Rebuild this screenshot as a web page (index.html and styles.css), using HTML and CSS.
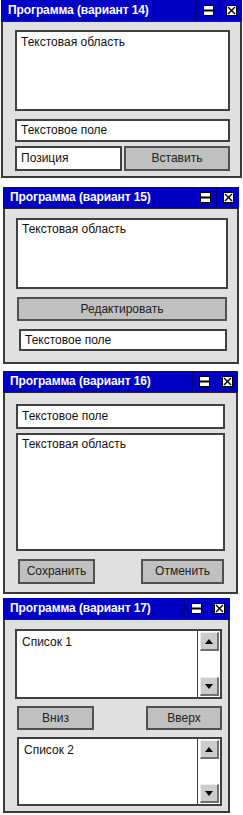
FILE: index.html
```html
<!DOCTYPE html>
<html lang="ru">

<head>
    <meta charset="UTF-8">
    <link rel="stylesheet" href="styles.css">
    <title>Варианты</title>
</head>

<body>
    <div class="win w14">
        <div class="titlebar">
            <span class="title">Программа (вариант 14)</span>
            <span class="ctl">
                <svg width="11" height="11" viewBox="0 0 11 11"><rect x="0.5" y="0.5" width="10" height="10" fill="#fff" stroke="#000"/><line x1="0" y1="5.5" x2="11" y2="5.5" stroke="#000" stroke-width="2"/></svg>
            </span>
            <span class="ctl">
                <svg width="11" height="11" viewBox="0 0 11 11"><rect x="0.5" y="0.5" width="10" height="10" fill="#fff" stroke="#000"/><path d="M2 2L9 9M9 2L2 9" stroke="#000" stroke-width="1.4"/></svg>
            </span>
        </div>
        <div class="body">
            <div class="field area">Текстовая область</div>
            <div class="field line">Текстовое поле</div>
            <div class="row">
                <div class="field pos">Позиция</div>
                <div class="btn ins">Вставить</div>
            </div>
        </div>
    </div>

    <div class="win w15">
        <div class="titlebar">
            <span class="title">Программа (вариант 15)</span>
            <span class="ctl">
                <svg width="11" height="11" viewBox="0 0 11 11"><rect x="0.5" y="0.5" width="10" height="10" fill="#fff" stroke="#000"/><line x1="0" y1="5.5" x2="11" y2="5.5" stroke="#000" stroke-width="2"/></svg>
            </span>
            <span class="ctl">
                <svg width="11" height="11" viewBox="0 0 11 11"><rect x="0.5" y="0.5" width="10" height="10" fill="#fff" stroke="#000"/><path d="M2 2L9 9M9 2L2 9" stroke="#000" stroke-width="1.4"/></svg>
            </span>
        </div>
        <div class="body">
            <div class="field area">Текстовая область</div>
            <div class="btn edit">Редактировать</div>
            <div class="field line">Текстовое поле</div>
        </div>
    </div>

    <div class="win w16">
        <div class="titlebar">
            <span class="title">Программа (вариант 16)</span>
            <span class="ctl">
                <svg width="11" height="11" viewBox="0 0 11 11"><rect x="0.5" y="0.5" width="10" height="10" fill="#fff" stroke="#000"/><line x1="0" y1="5.5" x2="11" y2="5.5" stroke="#000" stroke-width="2"/></svg>
            </span>
            <span class="ctl">
                <svg width="11" height="11" viewBox="0 0 11 11"><rect x="0.5" y="0.5" width="10" height="10" fill="#fff" stroke="#000"/><path d="M2 2L9 9M9 2L2 9" stroke="#000" stroke-width="1.4"/></svg>
            </span>
        </div>
        <div class="body">
            <div class="field line">Текстовое поле</div>
            <div class="field area">Текстовая область</div>
            <div class="row">
                <div class="btn save">Сохранить</div>
                <div class="btn cancel">Отменить</div>
            </div>
        </div>
    </div>

    <div class="win w17">
        <div class="titlebar">
            <span class="title">Программа (вариант 17)</span>
            <span class="ctl">
                <svg width="11" height="11" viewBox="0 0 11 11"><rect x="0.5" y="0.5" width="10" height="10" fill="#fff" stroke="#000"/><line x1="0" y1="5.5" x2="11" y2="5.5" stroke="#000" stroke-width="2"/></svg>
            </span>
            <span class="ctl">
                <svg width="11" height="11" viewBox="0 0 11 11"><rect x="0.5" y="0.5" width="10" height="10" fill="#fff" stroke="#000"/><path d="M2 2L9 9M9 2L2 9" stroke="#000" stroke-width="1.4"/></svg>
            </span>
        </div>
        <div class="body">
            <div class="list list1">
                <div class="list-text">Список 1</div>
                <div class="scroll">
                    <div class="arrow">
                        <svg width="8" height="5" viewBox="0 0 8 5"><path d="M0 5L4 0L8 5Z" fill="#000"/></svg>
                    </div>
                    <div class="arrow">
                        <svg width="8" height="5" viewBox="0 0 8 5"><path d="M0 0L4 5L8 0Z" fill="#000"/></svg>
                    </div>
                </div>
            </div>
            <div class="row">
                <div class="btn down">Вниз</div>
                <div class="btn up">Вверх</div>
            </div>
            <div class="list list2">
                <div class="list-text">Список 2</div>
                <div class="scroll">
                    <div class="arrow">
                        <svg width="8" height="5" viewBox="0 0 8 5"><path d="M0 5L4 0L8 5Z" fill="#000"/></svg>
                    </div>
                    <div class="arrow">
                        <svg width="8" height="5" viewBox="0 0 8 5"><path d="M0 0L4 5L8 0Z" fill="#000"/></svg>
                    </div>
                </div>
            </div>
        </div>
    </div>
</body>

</html>
```

FILE: styles.css
```css
body {
    margin: 0;
    background-color: #fff;
    font-family: "Liberation Sans", Arial, sans-serif;
    font-size: 12px;
    color: #111;
}

.win {
    box-sizing: border-box;
    background-color: #e0e0e0;
    border: 2px solid #3a3a3a;
}

.w14 {
    width: 241px;
    height: 178px;
    margin-left: 1px;
}

.w15 {
    width: 236px;
    height: 177px;
    margin: 9px 0 0 3px;
}

.w16 {
    width: 235px;
    height: 223px;
    margin: 7px 0 0 3px;
}

.w17 {
    width: 227px;
    height: 215px;
    margin: 4px 0 0 3px;
}

.titlebar {
    display: flex;
    align-items: stretch;
    height: 21px;
    background-color: #0000c4;
    border-bottom: 1px solid #222;
    margin: -2px -2px 0 -2px;
}

.title {
    flex: 1;
    padding-left: 7px;
    line-height: 21px;
    color: #fff;
    font-weight: bold;
    letter-spacing: -0.1px;
}

.ctl {
    display: flex;
    align-items: center;
    justify-content: center;
    width: 22px;
    border-left: 1px solid #000070;
}

.body {
    padding: 8px 10px 0 12px;
    display: flex;
    flex-direction: column;
}

.field {
    box-sizing: border-box;
    background-color: #fff;
    border: 2px solid #404040;
    padding: 2px 4px;
}

.btn {
    box-sizing: border-box;
    background-color: #c0c0c0;
    border: 2px solid #505050;
    text-align: center;
    color: #222;
}

.row {
    display: flex;
    justify-content: space-between;
}

/* вариант 14 */
.w14 .area {
    height: 81px;
    padding-top: 3px;
}

.w14 .line {
    height: 23px;
    margin-top: 8px;
    line-height: 15px;
}

.w14 .row {
    margin-top: 4px;
}

.w14 .pos {
    width: 107px;
    height: 25px;
    line-height: 17px;
}

.w14 .ins {
    width: 106px;
    height: 25px;
    line-height: 21px;
}

/* вариант 15 */
.w15 .body {
    padding: 9px 9px 0 11px;
}

.w15 .area {
    height: 71px;
}

.w15 .edit {
    height: 24px;
    margin: 8px 1px 0 1px;
    line-height: 20px;
}

.w15 .line {
    height: 22px;
    margin: 8px 1px 0 3px;
    line-height: 14px;
}

/* вариант 16 */
.w16 .body {
    padding: 11px 11px 0 11px;
}

.w16 .line {
    height: 25px;
    line-height: 17px;
}

.w16 .area {
    height: 118px;
    margin-top: 4px;
}

.w16 .row {
    margin: 8px 1px 0 2px;
}

.w16 .btn {
    height: 25px;
    line-height: 21px;
}

.w16 .save {
    width: 77px;
}

.w16 .cancel {
    width: 83px;
}

/* вариант 17 */
.w17 .body {
    padding: 9px 6px 0 10px;
}

.list {
    box-sizing: border-box;
    display: flex;
    background-color: #fff;
    border: 2px solid #404040;
}

.list1 {
    height: 70px;
}

.list2 {
    height: 69px;
    margin-left: 2px;
}

.list-text {
    flex: 1;
    padding: 4px 5px;
}

.scroll {
    width: 19px;
    display: flex;
    flex-direction: column;
    justify-content: space-between;
    border-left: 1px solid #404040;
    padding: 1px 1px 1px 2px;
}

.arrow {
    display: flex;
    align-items: center;
    justify-content: center;
    height: 16px;
    background-color: #cccccc;
    border-top: 1px solid #eee;
    border-left: 1px solid #eee;
    border-right: 2px solid #707070;
    border-bottom: 2px solid #707070;
}

.w17 .row {
    margin: 7px 0 7px 2px;
}

.w17 .btn {
    height: 24px;
    line-height: 20px;
}

.w17 .down {
    width: 77px;
}

.w17 .up {
    width: 76px;
}
```
